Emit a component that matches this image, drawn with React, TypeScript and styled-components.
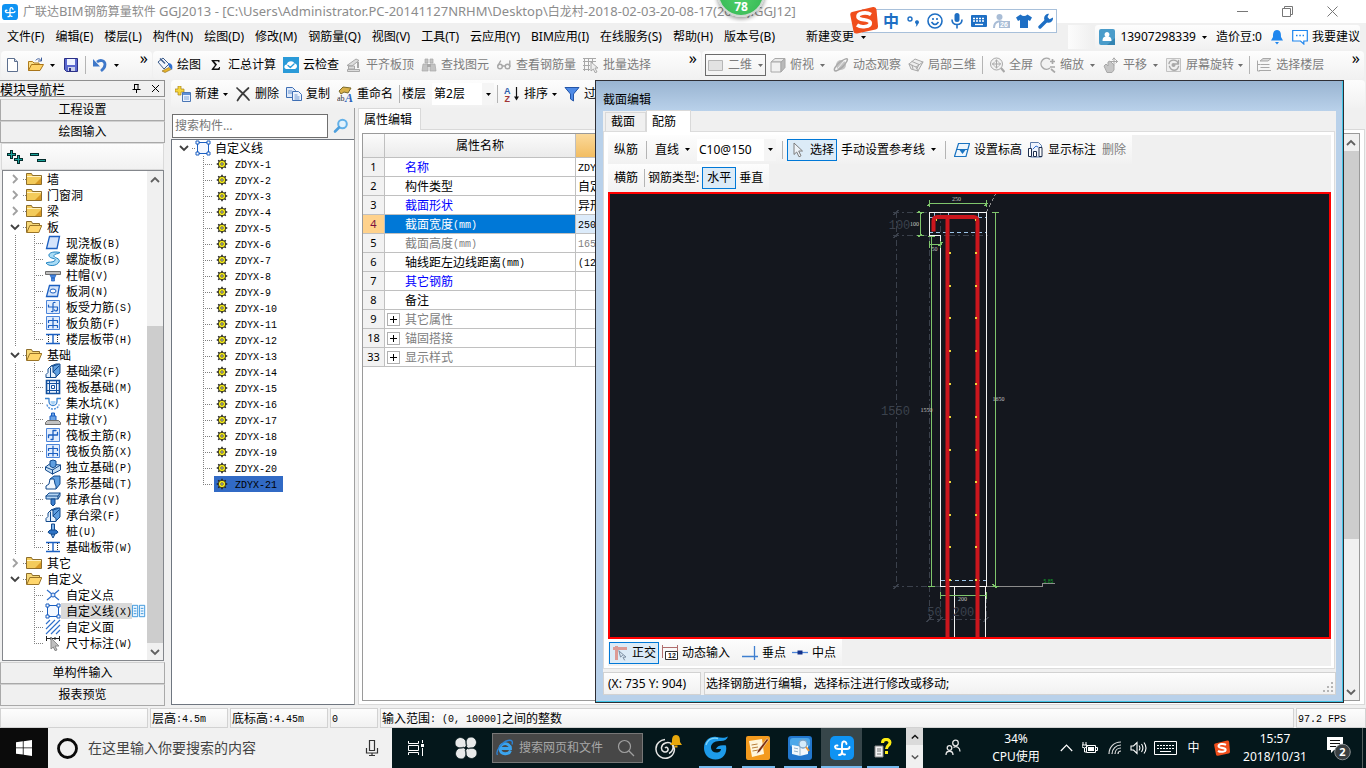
import React from "react";
import styled, { createGlobalStyle, css } from "styled-components";

const Global = createGlobalStyle`
  *, *::before, *::after { box-sizing: border-box; }
  html, body { margin: 0; padding: 0; }
  body {
    font-family: "Noto Sans", "Noto Sans CJK SC", sans-serif;
    font-size: 12px;
    line-height: 16px;
    color: #000;
    background: #f0f0f0;
    overflow: hidden;
  }
  button, input, select {
    font: inherit;
    color: inherit;
    margin: 0;
    padding: 0;
    border: 0;
    background: none;
    border-radius: 0;
    outline: none;
  }
  svg { display: block; flex: none; }
  ul { list-style: none; margin: 0; padding: 0; }
  a { color: inherit; text-decoration: none; }
`;

/* ---------- shared text and icon helpers ---------- */

const Mono = styled.span`
  font-family: "Liberation Mono", monospace;
  font-size: 10px;
  line-height: 10px;
  vertical-align: 1px;
`;

const SongWrap = styled.span`
  display: inline-block;
  height: 16px;
  vertical-align: top;
  font-family: "Noto Sans CJK SC", sans-serif;
  font-size: 12px;
  line-height: 16px;
  white-space: pre;
`;

/* Chinese runs stay 12px wide, Latin runs take the half-width face. */
function Song({ children }: { children: string }) {
  const runs = children.match(/[\x20-\x7e]+|[^\x20-\x7e]+/g) ?? [];
  return (
    <SongWrap>
      {runs.map((r, i) => (/^[\x20-\x7e]/.test(r) ? <Mono key={i}>{r}</Mono> : r))}
    </SongWrap>
  );
}

const line = { fill: "none", strokeLinecap: "round" as const, strokeLinejoin: "round" as const };
const G = "#a8a8a8";
const B = "#1b5fc1";

const glyphs: Record<string, React.ReactNode> = {
  doc: (
    <>
      <path d="M2.500 1.500h7l3 3v10h-10z" fill="#fff" stroke="#5d6f8e" />
      <path d="M9.500 1.500v3h3" fill="#cfdcf0" stroke="#5d6f8e" />
    </>
  ),
  open: (
    <>
      <path d="M.5 13.500v-9h4l1.500 1.500h5v3" fill="#fbe08a" stroke="#b07c1c" />
      <path d="M.5 13.500l3-6h12l-3.500 6z" fill="#ffd367" stroke="#a9751a" />
      <path d="M8 3c2-2 4-1.500 5 .5m.5-2.500v3h-3" {...line} stroke="#3a5a9a" />
    </>
  ),
  save: (
    <>
      <path d="M1.500 1.500h13v13h-11l-2-2z" fill="#5a68cf" stroke="#2a2f86" />
      <path d="M4 2h8v6H4z" fill="#eef2ff" />
      <path d="M5 10h7v4H5z" fill="#c9cfe9" />
      <path d="M6 11h2v3H6z" fill="#2a2f86" />
    </>
  ),
  undo: (
    <>
      <path d="M5 5c4-3 8-1 8 2.500 0 3-2 5-4 6.500" fill="none" stroke="#3f78c9" strokeWidth="2.800" />
      <path d="M1 2v7.500h7z" fill="#3f78c9" />
    </>
  ),
  paint: (
    <>
      <path d="M1 5l5-4 6 6-5 5z" fill="#f3f6fb" stroke="#3c5c8c" />
      <path d="M3 1.500l5 5" stroke="#3c5c8c" strokeWidth="1.400" />
      <path d="M11 6c4 0 5 3 4 7l-3-3z" fill="#2f6fd0" />
      <path d="M5 14l7-3.500 2 2-6 3z" fill="#e8b52c" stroke="#8a6413" strokeWidth=".6" />
    </>
  ),
  sigma: <path d="M3.500 3h8v2.200h-1c-.2-.8-.5-1-1.200-1H6.200L9 7.600 6 11.400h3.600c.9 0 1.200-.4 1.500-1.400h1L11.600 13h-8v-.8L7 8 3.500 3.800z" fill="#111" />,
  cloud: (
    <>
      <path d="M0 0h16v16H0z" fill="#2a9ad8" />
      <path d="M3 12c-2.500-1-2-4.500.8-4.500C4.500 4 10 3 11.500 6.500c3 0 3.500 4.500.5 5.500z" fill="#fff" />
      <path d="M5 8.500l2.300 2L11 7" {...line} stroke="#2a9ad8" strokeWidth="1.300" />
    </>
  ),
  align: (
    <>
      <path d="M1 8.500L10 2l3 1.500L6 9zM2.500 9h6v3h-6zM1.500 12.500h12v2h-12z" fill="#dcdcdc" stroke={G} />
      <path d="M12 5v6" stroke={G} strokeWidth="2" />
    </>
  ),
  binoc: (
    <>
      <path d="M4 2h3v4H4zM9 2h3v4H9zM2 7h5v7H1zM9 7h5l1 7H9z" fill="#c3c3c3" stroke={G} strokeWidth=".7" />
      <path d="M6 7h4v3H6z" fill={G} />
    </>
  ),
  glasses: (
    <g {...line} stroke={G} strokeWidth="1.400">
      <circle cx="4" cy="9.500" r="2.300" />
      <circle cx="11.500" cy="9.500" r="2.300" />
      <path d="M6.300 9h3M2 8.500L4.500 4M13.800 9.500V4" />
    </g>
  ),
  batch: (
    <>
      <path d="M1.500 1v13M5.500 1v13M9.500 1v5M0 1.500h13M0 4.500h13M0 8.500h7M0 12.500h7" fill="none" stroke={G} />
      <path d="M8 5l7 6h-3l2 4-2 .6-1.600-3.600L8 14z" fill="#eee" stroke={G} />
    </>
  ),
  slab: <path d="M.5 3.500h14v10H.5z" fill="#e2e2e2" stroke="#b6b6b6" />,
  cube: (
    <>
      <path d="M1 5l4-3.500h10L11 5z" fill="#e9e9e9" stroke={G} />
      <path d="M1 5h10v10H1z" fill="#f1f1f1" stroke={G} />
      <path d="M11 5l4-3.500v9L11 15z" fill="#b9b9b9" stroke={G} />
    </>
  ),
  orbit: (
    <>
      <circle cx="8" cy="8" r="5" fill="#c2c2c2" />
      <path d="M3 14C-1 14 3 8 7 5s9-5 7-1-7 9-11 10z" fill="none" stroke={G} strokeWidth="1.500" />
      <path d="M5 11l6-7" stroke="#eee" />
    </>
  ),
  part3d: (
    <>
      <path d="M1 7l6-5 8 3-5 9-7-2z" fill="#eee" stroke={G} />
      <path d="M1 7l7 3 7-5M8 10l2 4M4 4.500l7 3-2 4M4 8L5 12" {...line} stroke={G} />
    </>
  ),
  full: (
    <>
      <circle cx="7.500" cy="7" r="6" fill="#f2f2f2" stroke={G} />
      <path d="M7.500 3v8M3.500 7h8M6 4.500L7.500 3 9 4.500M6 9.500L7.500 11 9 9.500M5 5.500L3.500 7 5 8.500M10 5.500L11.500 7 10 8.500" {...line} stroke={G} />
      <path d="M12 11l3.500 4" stroke={G} strokeWidth="2.200" />
    </>
  ),
  zoom: (
    <>
      <path d="M10 2.500A5.500 5.500 0 1 0 10 11" fill="#f2f2f2" stroke={G} strokeWidth="1.400" />
      <path d="M10 4.500h5M12.500 2v5M11 12l4 3.500" stroke={G} strokeWidth="1.700" />
      <path d="M10 10h5" stroke={G} strokeWidth="1.500" />
    </>
  ),
  pan: (
    <>
      <path d="M1 9l2-2 2 2V5l2-1 4 4v5l-2 2.500H4z" fill="#c6c6c6" stroke={G} />
      <path d="M11 1v7M7.500 4.500h7M9.500 2.500L11 1l1.500 1.500M13 3l1.500 1.500L13 6" {...line} stroke={G} />
    </>
  ),
  rotate: (
    <>
      <path d="M.5 1.500h14v13H.5z" fill="#efefef" stroke="#c2c2c2" />
      <path d="M3 6.500C4 2 11 2 12 6.500m.5-3v3.500H9M12.500 9.500c-1.500 5-7 5-9 0" {...line} stroke={G} strokeWidth="1.400" />
      <circle cx="7.500" cy="8" r="2" fill={G} />
    </>
  ),
  floors: (
    <>
      <path d="M4 4l3-2.500h8L12 4zM4.500 7.500h9M4.500 10.500h9M3 13.500h12" fill="#d8d8d8" stroke={G} />
      <path d="M1.500 4v10h2M1.500 7.500H4" {...line} stroke={G} />
    </>
  ),
  addnew: (
    <>
      <path d="M3 0h3v3h3v3H6v3H3V6H0V3h3z" fill="#f6d63b" stroke="#a8821a" strokeWidth=".7" />
      <path d="M7.500 6.500h8v9h-8z" fill="#e9f1fd" stroke="#4a76b5" />
      <path d="M8 7h7v2H8z" fill="#5d8fd8" />
      <path d="M9 11h5M9 13h5" stroke="#7ea3d8" />
    </>
  ),
  cross: <path d="M2 2c3 3 8 7 12 12M13.500 2C9 6 5 10 2.500 14.500" {...line} stroke="#3c3c3c" strokeWidth="1.700" />,
  copy: (
    <>
      <path d="M.5 1.500h6l3 3v7h-9z" fill="#dfeafa" stroke="#3f6fb4" />
      <path d="M6.500 5.500h6l3 3v6h-9z" fill="#eef4fd" stroke="#3f6fb4" />
      <path d="M2 5h4M2 7h4M8.500 9h3M8.500 11h5M8.500 13h5" stroke="#6d97d2" />
    </>
  ),
  rename: (
    <>
      <path d="M2 5l4-4 8 1-3 5-4-1-3 2z" fill="#d8b04a" stroke="#7c6a2a" />
      <text x="0" y="15" fontSize="8" fontFamily="Liberation Serif" fill="#333">ab</text>
      <text x="8" y="15.500" fontSize="12" fontWeight="bold" fontStyle="italic" fontFamily="Liberation Serif" fill="#2a5fb8">A</text>
    </>
  ),
  sort: (
    <>
      <text x="0" y="7.500" fontSize="9" fontWeight="bold" fontFamily="Liberation Sans" fill="#2f5fae">A</text>
      <text x="0.500" y="15.500" fontSize="9" fontWeight="bold" fontFamily="Liberation Sans" fill="#a03535">Z</text>
      <path d="M12.500 1v11" stroke="#111" strokeWidth="1.200" />
      <path d="M10 10.500h5l-2.500 4z" fill="#111" />
    </>
  ),
  funnel: <path d="M1 1.500h14L9.500 8v7l-3-2V8z" fill="#4e8ae6" stroke="#2355a8" />,
  search: (
    <>
      <circle cx="9.500" cy="6" r="4.300" fill="#e2f2fd" stroke="#62b0e8" strokeWidth="2" />
      <path d="M6 9.500L2 13.500" stroke="#4c9fdd" strokeWidth="2.600" strokeLinecap="round" />
    </>
  ),
  folder: (
    <>
      <path d="M.5 13.500v-11h5l1 2h9v9z" fill="#f3cb5b" stroke="#8d6d2b" />
      <path d="M1 5.500h14" stroke="#fff1c0" />
      <path d="M9 13L15 7v6z" fill="#d89a25" />
    </>
  ),
  folderOpen: (
    <>
      <path d="M.5 13.500v-11h5l1 2h7v2" fill="#f6d878" stroke="#8d6d2b" />
      <path d="M.8 13.500l3-7h12l-3 7z" fill="#ffd66c" stroke="#9a7427" />
    </>
  ),
  line: (
    <>
      <path d="M2.500 2.500h11v11h-11z" fill="#f4f8ff" stroke={B} />
      <path d="M1 1h3v3H1zM12 1h3v3h-3zM1 12h3v3H1zM12 12h3v3h-3z" fill="#fff" stroke={B} />
    </>
  ),
  castSlab: <path d="M4.500 1.500h10l-2.500 12H1.500z" fill="#d4e4fb" stroke={B} strokeWidth="1.300" />,
  spiral: <path d="M15 1.500C8 0 3 2 4 5s8 2 6 4.500-7 1-9 2.500c3 4 11 3 13-1S8 7 9 4.500s4-1 6-3z" fill="#a9dcf6" stroke="#2384c2" />,
  cap: (
    <>
      <path d="M.5 4.500h15v3H.5z" fill="#bdbdbd" stroke="#6d6d6d" />
      <path d="M5 8h6l-1.500 3h-3zM6.500 11h3v3h-3z" fill="#4c88dc" stroke={B} strokeWidth=".7" />
    </>
  ),
  slabHole: (
    <>
      <path d="M4.500 2.500h10l-2 11h-11z" fill="#d4e4fb" stroke={B} strokeWidth="1.300" />
      <ellipse cx="8" cy="8" rx="3" ry="2" fill="#fff" stroke={B} />
    </>
  ),
  rebarS: (
    <>
      <path d="M1.500 1.500h13v13h-13z" fill="#e2edfd" stroke="#4d86da" />
      <path d="M10 3.500q-2-.5-2 1.500v7q0 1-1.500.5M3.500 8h9v3q-2 2-3 0M3.500 8V6" {...line} stroke={B} strokeWidth="1.200" />
    </>
  ),
  rebarF: (
    <>
      <path d="M1.500 1.500h13v13h-13z" fill="#e2edfd" stroke="#4d86da" />
      <path d="M8 3v10M3.500 5.500h9M3.500 10.500h9M3.500 5.500v2M12.500 5.500v2M3.500 10.500v2M12.500 10.500v2" {...line} stroke={B} strokeWidth="1.200" />
    </>
  ),
  band: (
    <>
      <path d="M1 3.500h14M1 12.500h14" stroke={B} strokeWidth="1.400" />
      <path d="M8 4v8" stroke={B} strokeWidth="1.400" />
      <path d="M3.500 4v8M12.500 4v8" stroke="#333" strokeDasharray="1 1" />
    </>
  ),
  beam: (
    <>
      <path d="M6 3l5-2h4v9l-4 4H8z" fill="#5f9fe0" stroke="#134a8c" />
      <path d="M1 14.500v-3l2-2V6l3-3h2v6l3 2.500v3z" fill="#e6f1fc" stroke="#134a8c" />
      <path d="M5.500 5v9M8 3l5-1.500M8 9l6-6" {...line} stroke="#134a8c" />
    </>
  ),
  raft: (
    <>
      <path d="M1.500 1.500h13v13h-13z" fill="#e9f2fd" stroke="#12509e" strokeWidth="1.600" />
      <path d="M4.500 2v12M11.500 2v12M2 4.500h12M2 11.500h12" fill="none" stroke="#12509e" />
      <path d="M6.500 6.500h3v3h-3z" fill="#fff" stroke="#12509e" />
    </>
  ),
  sump: (
    <>
      <path d="M0 3.500h4v3a4 4 0 0 0 8 0v-3h4" {...line} stroke="#3a83cf" strokeWidth="1.300" />
      <path d="M5.500 6h5v2l-2.500 1.500L5.500 8z" fill="#a9d2f5" />
      <path d="M2 9.500c1 6 11 6 12 0" fill="none" stroke="#5b97dc" strokeDasharray="2 1" strokeWidth="1.500" />
    </>
  ),
  pier: (
    <>
      <path d="M5 9V5h6v4M6.500 5V2h3v3" fill="#6ea4e4" stroke={B} />
      <path d="M.5 13.500v-2l2-2h11l2 2v2z" fill="#c2c2c2" stroke="#6d6d6d" />
    </>
  ),
  rebarR: (
    <>
      <path d="M1.500 1.500h13v13h-13z" fill="#e2edfd" stroke="#4d86da" />
      <path d="M8 3.500v9M3.500 8h9M3.500 8v2.500M8 3.500h3M12.500 8V5.500M8 12.500H6" {...line} stroke={B} strokeWidth="1.300" />
    </>
  ),
  isolated: (
    <>
      <path d="M.5 8l4-3 11 1v5l-8 4-7-4z" fill="#c7e0f6" stroke="#134a8c" />
      <path d="M5 2l3-1 3 1v5l-3 2-3-2z" fill="#5f9fe0" stroke="#134a8c" />
      <path d="M.5 8l7 3 8-5M7.500 11v4" {...line} stroke="#134a8c" />
    </>
  ),
  strip: (
    <>
      <path d="M5 4l4-3h6v8l-4 5z" fill="#5f9fe0" stroke="#134a8c" />
      <path d="M1 14v-3l3-2 1-5h4l1 5 1 2v3z" fill="#f1f7fd" stroke="#134a8c" />
    </>
  ),
  pileCap: (
    <>
      <path d="M1 5l3-3h11v3l-2 3H1z" fill="#b6d6f4" stroke="#134a8c" />
      <path d="M1 5h12v3M13 5l2-3" {...line} stroke="#134a8c" />
      <path d="M6 8h4v5l-2 2-2-2z" fill="#3c7fcf" stroke="#134a8c" />
    </>
  ),
  pile: (
    <>
      <path d="M6.500 1h3v11L8 15l-1.500-3z" fill="#7eb3ea" stroke="#134a8c" />
      <path d="M3 9c1 3 9 3 10 0l-2-2H5z" fill="#2e73c4" stroke="#134a8c" />
    </>
  ),
  point: (
    <>
      <path d="M2 3l12 10M14 3L2 13" stroke="#2e6fca" strokeWidth="1.200" />
      <circle cx="8" cy="8" r="2" fill="#dceaff" stroke={B} />
    </>
  ),
  area: <path d="M1 5l4-4M1 10l9-9M1 15L15 1M6 15l9-9M11 15l4-4" stroke="#2e6fca" strokeWidth="1.100" />,
  dims: (
    <>
      <path d="M1.500 1v5M14.500 1v5M1 3.500h14M6 2v3M10 2v3" stroke="#222" />
      <path d="M6 3l8 8h-4l2 4-2 .6L8.300 12 6 14z" fill="#bfbfbf" stroke="#8a8a8a" />
    </>
  ),
  gear: (
    <>
      <g stroke="#222" strokeWidth="2">
        <path d="M8 1v14M1 8h14M3 3l10 10M13 3L3 13" />
      </g>
      <circle cx="8" cy="8" r="5" fill="#f5ec19" stroke="#222" strokeWidth="1.200" />
      <circle cx="8" cy="8" r="1.600" fill="#fff" stroke="#222" />
    </>
  ),
  cursor: <path d="M4 1l8.500 8H8.700l2.300 4.800-2 1L6.700 10 4 12.500z" fill="#eef3f8" stroke="#7c7c7c" />,
  elev: (
    <>
      <path d="M4.500 1.500h11l-3.500 13H.5z" fill="#eef6fd" stroke="#1a73c0" strokeWidth="1.200" />
      <path d="M2 7.500h12" stroke="#1a73c0" />
      <path d="M5.500 8h6l-3 4z" fill="#1a73c0" />
    </>
  ),
  chart: (
    <>
      <path d="M2.500.5h8l3 3V15h-11z" fill="#eef4ff" stroke="#5c7cab" />
      <path d="M.5 14.500v-8h3v8zM5.500 14.500v-5h3v5zM11 14.500v-9h3v9z" fill="#fff" stroke="#1f2f4d" />
      <path d="M5 7l3-3 2 1" {...line} stroke="#2f6fd0" />
    </>
  ),
  ortho: (
    <>
      <path d="M1 3.500h14M4.500 1v14" stroke="#dd9a94" strokeWidth="3" />
      <path d="M7 6l7 6-3 .3 1.500 2.700M7 6l1.500 6 2-1.500" {...line} stroke="#7a8ca0" />
    </>
  ),
  dyn: (
    <>
      <path d="M.5 0v13M15.500 0v6M.5 2.500h15" fill="none" stroke="#b06d6d" />
      <path d="M3.500 6.500h12v8h-12z" fill="#fff" stroke="#333" />
      <text x="6" y="13" fontSize="7" fontWeight="bold" fontFamily="Liberation Sans" fill="#111">12</text>
    </>
  ),
  perp: <path d="M0 11.500h16M12.500 1v14" stroke="#3f7fd0" strokeWidth="1.300" />,
  mid: (
    <>
      <path d="M0 7.500h16" stroke="#4d86d8" strokeWidth="1.300" />
      <path d="M5.500 5.500h5v4h-5z" fill="#12308a" />
    </>
  ),
  user: (
    <>
      <rect width="16" height="16" rx="2" fill="#4a9cca" />
      <path d="M16 9v7H8z" fill="#3484b2" />
      <path d="M8 3a2.500 2.500 0 0 1 1.500 4.500c2 .5 3 1.500 3 4.500h-9c0-3 1-4 3-4.500A2.500 2.500 0 0 1 8 3z" fill="#fff" />
    </>
  ),
  bell: <path d="M8 1c4 0 4 4 4 7l2 3.500H2L4 8c0-3 0-7 4-7zM6 13h4l-2 2.500z" fill="#1f86ee" />,
  chat: (
    <>
      <path d="M.7 1.500h14.600v10.500h-3.500v3l-3.300-3H.7z" fill="#fff" stroke="#1f86ee" strokeWidth="1.200" />
      <path d="M4 6.500h1.500M7.300 6.500h1.500M10.600 6.500H12" stroke="#1f86ee" strokeWidth="1.300" />
    </>
  ),
  columns: (
    <>
      <path d="M.5 1.500h6v13h-6zM8.500 1.500h6v13h-6z" fill="#eaf5ff" stroke="#2f8fd8" />
      <path d="M2 5h3M2 8h3M2 11h3M10 5h3M10 8h3M10 11h3" stroke="#2f8fd8" />
    </>
  ),
};

function Icon({ name, size = 16 }: { name: string; size?: number }) {
  return (
    <svg width={size} height={size} viewBox="0 0 16 16" aria-hidden="true">
      {glyphs[name]}
    </svg>
  );
}

const CaretBox = styled.span<{ $dim?: boolean; $tight?: boolean }>`
  display: inline-flex;
  justify-content: center;
  align-items: center;
  width: ${(p) => (p.$tight ? 5 : 8)}px;
  color: ${(p) => (p.$dim ? "#6e6e6e" : "#000")};
`;

function Caret({ dim, tight }: { dim?: boolean; tight?: boolean }) {
  return (
    <CaretBox $dim={dim} $tight={tight}>
      <svg width="5" height="3" viewBox="0 0 5 3" aria-hidden="true">
        <path d="M0 0h5L2.500 3z" fill="currentColor" />
      </svg>
    </CaretBox>
  );
}

function Chevron({ dir, color = "#404040", size = 10 }: { dir: "up" | "down" | "right"; color?: string; size?: number }) {
  const d = { up: "M1 7l4-4 4 4", down: "M1 3l4 4 4-4", right: "M3 1l4 4-4 4" }[dir];
  return (
    <svg width={size} height={size} viewBox="0 0 10 10" aria-hidden="true">
      <path d={d} fill="none" stroke={color} strokeWidth="1.800" />
    </svg>
  );
}

/* ---------- window chrome ---------- */

const Page = styled.div`
  position: relative;
  display: flex;
  flex-direction: column;
  height: 100vh;
  overflow: hidden;
`;

const TitleBar = styled.header`
  display: flex;
  align-items: center;
  height: 23px;
  padding: 0 28px 0 2px;
  background: #fff;
  color: #8c8c8c;
  white-space: nowrap;
`;

const TitleText = styled.h1`
  flex: 1;
  margin: 0 0 0 5px;
  font-size: 12px;
  font-weight: 400;
  line-height: 22px;
`;

const TitleLatin = styled.span`
  font-size: 13px;
`;

const WindowButtons = styled.div`
  display: flex;
  gap: 34px;
`;

const PlainButton = styled.button`
  display: inline-flex;
  align-items: center;
  justify-content: center;
`;

const MenuBar = styled.nav`
  display: flex;
  align-items: center;
  gap: 11px;
  height: 28px;
  padding: 0 6px 0 7px;
  white-space: nowrap;
`;

const MenuItem = styled.button`
  display: inline-flex;
  align-items: center;
  gap: 5px;
  white-space: nowrap;
`;

const MenuSpacer = styled.span<{ $w?: number }>`
  ${(p) => (p.$w ? `width: ${p.$w}px;` : "flex: 1;")}
`;

const barFill = css`
  background: linear-gradient(#fdfdfd, #f1f1f1);
`;

const Account = styled.div`
  ${barFill}
  display: flex;
  align-items: center;
  gap: 7px;
  height: 24px;
  padding-left: 4px;
  border-radius: 3px;
`;

const AccountStub = styled.span`
  width: 24px;
  height: 24px;
  margin-right: -8px;
  background: linear-gradient(90deg, #fcfcfc, #f0f0f0);
`;

const Divider = styled.span`
  flex: none;
  width: 1px;
  height: 18px;
  background: #b4b4b4;
`;

const ToolStrip = styled.div<{ $left?: number; $width?: number; $grow?: boolean }>`
  ${barFill}
  display: flex;
  align-items: center;
  gap: 7px;
  height: 28px;
  padding-left: ${(p) => p.$left ?? 4}px;
  border-radius: 4px;
  white-space: nowrap;
  ${(p) => (p.$width ? `width: ${p.$width}px;` : "")}
  ${(p) => (p.$grow ? "flex: 1;" : "flex: none;")}
  > ${Divider} { margin: 0 -1px; }
`;

const ToolButton = styled.button<{ $dim?: boolean; $boxed?: boolean; $active?: number }>`
  display: inline-flex;
  align-items: center;
  gap: 4px;
  flex: none;
  height: 22px;
  white-space: nowrap;
  color: ${(p) => (p.$dim ? "#7d7d7d" : "#000")};
  ${(p) => p.$boxed && "border: 1px solid #6b6b6b; padding: 0 1px 0 2px; margin-right: -3px;"}
  ${(p) => p.$active && `border: 1px solid #0078d7; background: #dcebf7; padding: 0 ${p.$active}px;`}
`;

const More = styled.button`
  align-self: flex-start;
  margin-left: auto;
  padding-right: 4px;
  font-size: 16px;
  line-height: 14px;
`;

const ToolbarRow = styled.div`
  display: flex;
  gap: 1px;
  padding: 0 2px 0 1px;
`;

interface ToolProps {
  icon?: string;
  label: string;
  dim?: boolean;
  caret?: boolean | "tight";
  boxed?: boolean;
  active?: boolean;
}

function Tool({ icon, label, dim, caret, boxed, active }: ToolProps) {
  return (
    <ToolButton type="button" $dim={dim} $boxed={boxed} $active={active ? (icon ? 2 : 4) : undefined}>
      {icon && <Icon name={icon} />}
      <span>{label}</span>
      {caret && <Caret dim={dim} tight={caret === "tight"} />}
    </ToolButton>
  );
}

/* ---------- body panels ---------- */

const Body = styled.main`
  position: relative;
  flex: 1;
  min-height: 0;
  display: flex;
`;

const NavPanel = styled.aside`
  display: flex;
  flex-direction: column;
  width: 166px;
  flex: none;
  padding: 1px 1px 1px 0;
`;

const NavHeader = styled.div`
  display: flex;
  align-items: center;
  justify-content: space-between;
  height: 17px;
  padding-right: 4px;
  border: 1px solid #8f8f8f;
  border-left: 0;
  margin-bottom: 2px;
  font-size: 13px;
`;

const NavTools = styled.div`
  display: flex;
  gap: 10px;
`;

const NavButton = styled.button`
  flex: none;
  height: 22px;
  border: 1px solid #a9a9a9;
  border-top-color: #d0d0d0;
  background: #f0f0f0;
`;

const ExpandBar = styled.div`
  ${barFill}
  display: flex;
  align-items: center;
  gap: 7px;
  height: 27px;
  padding-left: 5px;
  margin: 0 1px;
  border: 1px solid #dadada;
`;

const TreeFrame = styled.div`
  display: flex;
  flex: 1;
  min-height: 0;
  margin: 0 1px 1px 2px;
  border: 1px solid #84878c;
  background: #fff;
  overflow: hidden;
`;

const Tree = styled.ul`
  flex: 1;
  min-width: 0;
  overflow: hidden;
`;

const dots = (dir: string) => `repeating-linear-gradient(${dir}, #808080 0 1px, transparent 1px 2px)`;

const RootRow = styled.li`
  display: flex;
  align-items: center;
  height: 16px;
  padding-left: 7px;
  white-space: nowrap;
  svg:first-child { margin-right: 6px; }
  background: ${dots("to right")} no-repeat 20px 8px / 3px 1px;
`;

const ChildRow = styled.li<{ $last?: boolean; $trunk?: boolean }>`
  display: flex;
  align-items: center;
  height: 16px;
  padding-left: 42px;
  white-space: nowrap;
  background-image: ${dots("to right")}, ${dots("to bottom")}${(p) => (p.$trunk ? `, ${dots("to bottom")}` : "")};
  background-repeat: no-repeat;
  background-position: 31px 8px, 31px 0, 12px 0;
  background-size: 10px 1px, 1px ${(p) => (p.$last ? 8 : 16)}px, 1px 16px;
`;

const Label = styled.span<{ $bg?: string; $pad?: number }>`
  display: inline-flex;
  align-items: center;
  height: 16px;
  padding-left: ${(p) => p.$pad ?? 5}px;
  background: ${(p) => p.$bg ?? "transparent"};
`;

const Scroll = styled.div`
  display: flex;
  flex-direction: column;
  width: 16px;
  flex: none;
  background: #f0f0f0;
`;

const ScrollEnd = styled.button`
  display: flex;
  align-items: center;
  justify-content: center;
  height: 17px;
  flex: none;
`;

const Track = styled.div<{ $grow: number }>`
  flex: ${(p) => p.$grow};
`;

const Thumb = styled.div<{ $grow: number }>`
  flex: ${(p) => p.$grow};
  background: #cdcdcd;
`;

const navRoots: { name: string; open?: boolean; kids?: [string, string][] }[] = [
  { name: "墙" },
  { name: "门窗洞" },
  { name: "梁" },
  {
    name: "板",
    open: true,
    kids: [
      ["castSlab", "现浇板(B)"], ["spiral", "螺旋板(B)"], ["cap", "柱帽(V)"], ["slabHole", "板洞(N)"],
      ["rebarS", "板受力筋(S)"], ["rebarF", "板负筋(F)"], ["band", "楼层板带(H)"],
    ],
  },
  {
    name: "基础",
    open: true,
    kids: [
      ["beam", "基础梁(F)"], ["raft", "筏板基础(M)"], ["sump", "集水坑(K)"], ["pier", "柱墩(Y)"],
      ["rebarR", "筏板主筋(R)"], ["rebarF", "筏板负筋(X)"], ["isolated", "独立基础(P)"], ["strip", "条形基础(T)"],
      ["pileCap", "桩承台(V)"], ["beam", "承台梁(F)"], ["pile", "桩(U)"], ["band", "基础板带(W)"],
    ],
  },
  { name: "其它" },
  {
    name: "自定义",
    open: true,
    kids: [["point", "自定义点"], ["line", "自定义线(X)"], ["area", "自定义面"], ["dims", "尺寸标注(W)"]],
  },
];

function ModuleNav() {
  return (
    <NavPanel>
      <NavHeader>
        模块导航栏
        <NavTools>
          <PlainButton type="button" aria-label="固定">
            <svg width="9" height="9" viewBox="0 0 9 9"><path d="M2.500 0v5M6 0v5M2 .5h4.500M.5 5.500h8M4.500 6v3" stroke="#000" fill="none" /></svg>
          </PlainButton>
          <PlainButton type="button" aria-label="关闭">
            <svg width="9" height="9" viewBox="0 0 9 9"><path d="M1 1l7 7M8 1L1 8" stroke="#000" /></svg>
          </PlainButton>
        </NavTools>
      </NavHeader>
      <NavButton type="button">工程设置</NavButton>
      <NavButton type="button">绘图输入</NavButton>
      <ExpandBar>
        <PlainButton type="button" aria-label="全部展开">
          <svg width="16" height="14" viewBox="0 0 16 14">
            <path d="M4.500 0v9M0 4.500h9M11.500 5v9M7 9.500h9" stroke="#062c2c" strokeWidth="3" />
            <path d="M4.500 1v7M1 4.500h7M11.500 6v7M8 9.500h7" stroke="#1aa39b" />
          </svg>
        </PlainButton>
        <PlainButton type="button" aria-label="全部折叠">
          <svg width="16" height="14" viewBox="0 0 16 14">
            <path d="M0 4.500h9M7 10.500h9" stroke="#062c2c" strokeWidth="3" />
            <path d="M1 4.500h7M8 10.500h7" stroke="#1aa39b" />
          </svg>
        </PlainButton>
      </ExpandBar>
      <TreeFrame>
        <Tree>
          {navRoots.map((r, ri) => (
            <React.Fragment key={r.name}>
              <RootRow>
                <Chevron dir={r.open ? "down" : "right"} color={r.open ? "#404040" : "#a0a0a0"} />
                <Icon name={r.open ? "folderOpen" : "folder"} />
                <Label><Song>{r.name}</Song></Label>
              </RootRow>
              {r.kids?.map(([icon, name], i) => (
                <ChildRow key={name} $last={i === r.kids!.length - 1} $trunk={ri < navRoots.length - 1}>
                  <Icon name={icon} />
                  <Label $bg={name === "自定义线(X)" ? "#d9d9d9" : undefined}><Song>{name}</Song></Label>
                  {name === "自定义线(X)" && <Icon name="columns" size={14} />}
                </ChildRow>
              ))}
            </React.Fragment>
          ))}
        </Tree>
        <Scroll>
          <ScrollEnd type="button" aria-label="向上"><Chevron dir="up" color="#606060" /></ScrollEnd>
          <Track $grow={137} />
          <Thumb $grow={316} />
          <ScrollEnd type="button" aria-label="向下"><Chevron dir="down" color="#606060" /></ScrollEnd>
        </Scroll>
      </TreeFrame>
      <NavButton type="button">单构件输入</NavButton>
      <NavButton type="button">报表预览</NavButton>
    </NavPanel>
  );
}

const Work = styled.div`
  flex: 1;
  min-width: 0;
  display: flex;
  flex-direction: column;
  padding: 1px 1px 2px 5px;
`;

const WorkColumns = styled.div`
  flex: 1;
  min-height: 0;
  display: flex;
  gap: 3px;
`;

const ListPanel = styled.section`
  display: flex;
  flex-direction: column;
  width: 184px;
  flex: none;
  padding-top: 5px;
  border-right: 1px solid #a0a0a0;
`;

const SearchRow = styled.label`
  display: flex;
  align-items: center;
  height: 26px;
  padding: 0 5px 1px 1px;
  gap: 5px;
`;

const SearchInput = styled.input`
  flex: 1;
  min-width: 0;
  height: 24px;
  padding: 0 2px;
  border: 1px solid #6f6f6f;
  background: #fff;
  &::placeholder { color: #777; opacity: 1; }
`;

const ListFrame = styled.div`
  flex: 1;
  min-height: 0;
  border: 1px solid #6f7680;
  border-right: 0;
  background: #fff;
  overflow: hidden;
`;

const PropPanel = styled.section`
  flex: 1;
  min-width: 0;
  display: flex;
  flex-direction: column;
`;

const Tab = styled.button<{ $on?: boolean; $w: number }>`
  flex: none;
  width: ${(p) => p.$w}px;
  height: ${(p) => (p.$on ? 22 : 19)}px;
  padding-left: 5px;
  border: 1px solid #d9d9d9;
  border-bottom: 0;
  background: ${(p) => (p.$on ? "#fff" : "#f0f0f0")};
  margin-bottom: ${(p) => (p.$on ? -1 : 0)}px;
  text-align: left;
  z-index: 1;
`;

const TabRow = styled.div`
  display: flex;
  align-items: flex-end;
`;

const PropPane = styled.div`
  flex: 1;
  min-height: 0;
  display: flex;
  padding: 3px 4px 3px 3px;
  border: 1px solid #d9d9d9;
  background: #fff;
`;

const PropFrame = styled.div`
  flex: 1;
  min-width: 0;
  display: flex;
  border: 1px solid #9a9a9a;
  background: #fff;
`;

const TableArea = styled.div`
  flex: 1;
  min-width: 0;
`;

const PropTable = styled.table`
  width: 100%;
  border-collapse: separate;
  border-spacing: 0;
  table-layout: fixed;
  th, td {
    padding: 0;
    height: 19px;
    border-right: 1px solid #c0c0c0;
    border-bottom: 1px solid #c0c0c0;
    font-weight: 400;
    text-align: left;
    white-space: nowrap;
    overflow: hidden;
  }
  thead th {
    height: 24px;
    text-align: center;
    background: linear-gradient(#fbfbfb, #ebebeb);
  }
  thead th:last-child { background: linear-gradient(#fbd99a, #f2bd62); }
`;

const NumCell = styled.th<{ $sel?: boolean }>`
  && {
    text-align: center;
    font-size: 11px;
    background: ${(p) => (p.$sel ? "#ffd28c" : "#f2f2f2")};
    color: ${(p) => (p.$sel ? "#7a1040" : "#000")};
  }
`;

const NameCell = styled.td<{ $tone?: string; $sel?: boolean }>`
  color: ${(p) => (p.$sel ? "#fff" : p.$tone ?? "#000")};
  background: ${(p) => (p.$sel ? "#0078d7" : "#fff")};
`;

const NameInner = styled.span`
  display: grid;
  grid-template-columns: 12px auto;
  align-items: center;
  gap: 6px;
  padding-left: 2px;
  justify-content: start;
`;

const Plus = styled.button`
  width: 13px;
  height: 13px;
  display: grid;
  place-items: center;
  border: 1px solid #b0b0b0;
`;

const ValueCell = styled.td<{ $sel?: boolean; $tone?: string }>`
  && { padding-left: 2px; }
  color: ${(p) => p.$tone ?? "#000"};
  background: ${(p) => (p.$sel ? "#dcebfa" : "#fff")};
`;

const props: [string, string, string, string?, boolean?][] = [
  ["1", "名称", "ZDYX-21", "#0000ff"],
  ["2", "构件类型", "自定义线", "#000"],
  ["3", "截面形状", "异形", "#0000ff"],
  ["4", "截面宽度(mm)", "250", "#000"],
  ["5", "截面高度(mm)", "1650", "#808080"],
  ["6", "轴线距左边线距离(mm)", "(125)", "#000"],
  ["7", "其它钢筋", "", "#0000ff"],
  ["8", "备注", "", "#000"],
  ["9", "其它属性", "", "#808080", true],
  ["18", "锚固搭接", "", "#808080", true],
  ["33", "显示样式", "", "#808080", true],
];

const Combo = styled.label<{ $w: number }>`
  display: grid;
  grid-template-columns: 1fr 12px;
  width: ${(p) => p.$w}px;
  height: 22px;
  flex: none;
  background: #fff;
  align-items: center;
  > select {
    grid-area: 1 / 1 / 2 / 3;
    appearance: none;
    padding-left: 2px;
    height: 22px;
  }
  > span {
    grid-area: 1 / 2 / 2 / 3;
    width: 12px;
    height: 22px;
    background: #f5f5f5;
    pointer-events: none;
  }
`;

const ComboGroup = styled.div`
  display: flex;
  align-items: center;
  gap: 6px;
  margin-left: -4px;
  margin-right: -3px;
`;

function WorkArea() {
  const items = Array.from({ length: 21 }, (_, i) => `ZDYX-${i + 1}`);
  return (
    <Work>
      <ToolStrip>
        <Tool icon="addnew" label="新建" caret="tight" />
        <Tool icon="cross" label="删除" />
        <Tool icon="copy" label="复制" />
        <Tool icon="rename" label="重命名" />
        <Divider />
        <ComboGroup>
          楼层
          <Combo $w={62}>
            <select aria-label="楼层" defaultValue="2"><option value="2">第2层</option></select>
            <Caret />
          </Combo>
        </ComboGroup>
        <Divider />
        <Tool icon="sort" label="排序" caret="tight" />
        <Tool icon="funnel" label="过滤" caret />
      </ToolStrip>
      <WorkColumns>
        <ListPanel>
          <SearchRow>
            <SearchInput type="text" placeholder="搜索构件…" aria-label="搜索构件" />
            <PlainButton type="button" aria-label="搜索"><Icon name="search" /></PlainButton>
          </SearchRow>
          <ListFrame>
            <Tree>
              <RootRow>
                <Chevron dir="down" />
                <Icon name="line" />
                <Label $pad={4}><Song>自定义线</Song></Label>
              </RootRow>
              {items.map((t, i) => (
                <ChildRow key={t} $last={i === 20}>
                  <Label $pad={2} $bg={i === 20 ? "#316ac5" : undefined}>
                    <Icon name="gear" size={12} />
                  </Label>
                  <Label $pad={7} $bg={i === 20 ? "#316ac5" : undefined}><Song>{t + " "}</Song></Label>
                </ChildRow>
              ))}
            </Tree>
          </ListFrame>
        </ListPanel>
        <PropPanel>
          <TabRow>
            <Tab type="button" $on $w={63}>属性编辑</Tab>
          </TabRow>
          <PropPane>
            <PropFrame>
              <TableArea>
                <PropTable>
                  <colgroup>
                    <col width="22" />
                    <col width="191" />
                    <col />
                  </colgroup>
                  <thead>
                    <tr><th aria-label="序号" /><th>属性名称</th><th>属性值</th></tr>
                  </thead>
                  <tbody>
                    {props.map(([n, name, value, tone, group]) => (
                      <tr key={n}>
                        <NumCell scope="row" $sel={n === "4"}>{n}</NumCell>
                        <NameCell $tone={tone} $sel={n === "4"}>
                          <NameInner>
                            {group ? (
                              <Plus type="button" aria-label="展开">
                                <svg width="7" height="7" viewBox="0 0 7 7"><path d="M0 3.500h7M3.500 0v7" stroke="#000" /></svg>
                              </Plus>
                            ) : <span />}
                            <Song>{name}</Song>
                          </NameInner>
                        </NameCell>
                        <ValueCell $sel={n === "4"} $tone={n === "5" ? "#808080" : undefined}><Song>{value}</Song></ValueCell>
                      </tr>
                    ))}
                  </tbody>
                </PropTable>
              </TableArea>
              <Scroll>
                <ScrollEnd type="button" aria-label="向上"><Chevron dir="up" color="#606060" /></ScrollEnd>
                <Thumb $grow={388} />
                <Track $grow={144} />
                <ScrollEnd type="button" aria-label="向下"><Chevron dir="down" color="#606060" /></ScrollEnd>
              </Scroll>
            </PropFrame>
          </PropPane>
        </PropPanel>
      </WorkColumns>
    </Work>
  );
}

/* ---------- section editor window ---------- */

const Dialog = styled.section`
  position: absolute;
  left: 595px;
  right: 22px;
  top: 1px;
  bottom: 4px;
  display: flex;
  flex-direction: column;
  border: 1px solid #2e2e34;
  background: #b9d1ea;
  padding: 0 7px 7px;
  box-shadow: inset -1px -1px 0 #3fc4e6;
`;

const DialogTitle = styled.h2`
  flex: none;
  height: 30px;
  margin: 0 -6px 0 -7px;
  padding: 9px 7px 0;
  font-size: 12px;
  font-weight: 400;
  line-height: 20px;
  background: linear-gradient(#99b4d1, #b9d1ea);
`;

const DialogBody = styled.div`
  flex: 1;
  min-height: 0;
  display: flex;
  flex-direction: column;
  background: #f0f0f0;
`;

const Pane = styled.div`
  flex: 1;
  min-height: 0;
  display: flex;
  flex-direction: column;
  margin-right: 1px;
  padding: 3px 3px 2px 4px;
  border: 1px solid #dcdcdc;
  background: #fff;
`;

const PaneInner = styled.div`
  flex: 1;
  min-height: 0;
  display: flex;
  flex-direction: column;
  background: #f0f0f0;
`;

const DialogTabs = styled(TabRow)`
  height: 20px;
  padding-left: 2px;
`;

const StripPair = styled.div<{ $gap: number }>`
  display: flex;
  align-items: center;
  gap: ${(p) => p.$gap}px;
`;

const EditorStrip = styled.div<{ $h: number; $left: number }>`
  ${barFill}
  align-self: flex-start;
  display: flex;
  align-items: center;
  gap: 6px;
  height: ${(p) => p.$h}px;
  padding: 0 6px 0 ${(p) => p.$left}px;
  white-space: nowrap;
  > ${Divider} { margin: 0 2px; }
`;

const Viewport = styled.div`
  flex: 1;
  min-height: 0;
  border: 2px solid #ff0000;
  background: #14171e;
  overflow: hidden;
  > svg { width: 100%; height: 100%; }
`;

const DialogStatus = styled.div`
  display: flex;
  gap: 3px;
  height: 23px;
  margin-top: 3px;
`;

const StatusCell = styled.div<{ $w?: number; $pad?: number }>`
  ${barFill}
  ${(p) => (p.$w ? `width: ${p.$w}px; flex: none;` : "flex: 1;")}
  display: flex;
  align-items: center;
  padding-left: ${(p) => p.$pad ?? 1}px;
  border: 1px solid #d2d2d2;
  white-space: nowrap;
`;

const Grip = styled.svg`
  margin: auto 1px 1px auto;
`;

const dotYs = [253, 286, 318, 351, 384, 417, 450, 482, 515, 547, 580];

function SectionDrawing() {
  return (
    <svg viewBox="610 194 720 443" preserveAspectRatio="xMidYMid slice" role="img" aria-label="截面配筋图">
      <g fill="none" shapeRendering="crispEdges">
        <g stroke="#3b414c" strokeDasharray="6 3 2 3">
          <path d="M896.500 212v374M929.500 236v384M940.500 212v24M940.500 587v33M986.500 597v23" />
          <path d="M893 212.500h36M893 235.500h95M893 586.500h47M928 619.500h59" />
        </g>
        <g stroke="#3b414c">
          <path d="M894 215l5-5M894 238l5-5M894 589l5-5M927 622l5-5M938 622l5-5M984 622l5-5" />
        </g>
        <path d="M987 212l9-18" stroke="#8c8c8c" strokeDasharray="4 2" />
        <path d="M986 586.500h57v-3h12" stroke="#8c8c8c" />
        <path d="M929.500 232.500h57M941 580.500h45M929 217.500h57M934.500 213v4M948.500 213v4M978.500 213v4" stroke="#9cc4e8" strokeDasharray="4 3" />
        <path d="M929.500 212.500h57v374h-46v-351h-11zM954.500 587v52M985.500 587v52" stroke="#f4f4f4" />
        <g stroke="#7fc56c">
          <path d="M929 203.500h58M929.500 200v7M986.500 200v7M928 206l3-3M985 206l3-3" />
          <path d="M920.500 212v24M917 212.500h7M917 235.500h7M919 211l3 3M919 237l3-3" />
          <path d="M931.500 236v350M928 236.500h7M928 586.500h7" />
          <path d="M929 244.500h13M929.500 241v7M940.500 241v7M939 246l4-4" />
          <path d="M995.500 212v374M992 212.500h7M992 586.500h7M993 584l4 4" />
          <path d="M941 595.500h45M940.500 592v7M986.500 592v7" />
        </g>
      </g>
      <g fill="none" stroke="#cb161d" strokeWidth="4">
        <path d="M934 231.500V221q0-4 4-4h36q4 0 4 4v418M948 218v421" />
      </g>
      <g fill="#ecd43c" shapeRendering="crispEdges">
        {dotYs.map((y) => (
          <React.Fragment key={y}>
            <rect x="949" y={y - 1} width="2" height="2" />
            <rect x="975" y={y - 1} width="2" height="2" />
          </React.Fragment>
        ))}
        <rect x="936" y="219" width="1" height="2" />
        <rect x="975" y="219" width="1" height="2" />
      </g>
      <g fontFamily="Liberation Serif" fontSize="6" fill="#c6c6c6" textAnchor="middle">
        <text x="957" y="201">250</text>
        <text x="915" y="226">100</text>
        <text x="935" y="251">50</text>
        <text x="927" y="412">1550</text>
        <text x="999" y="401">1650</text>
        <text x="963" y="601">200</text>
      </g>
      <text x="1044" y="583" fontFamily="Liberation Sans" fontSize="5" fill="#12a02a">5.85</text>
      <g fontFamily="Liberation Mono" fontSize="12" fill="#3b424d" textAnchor="middle">
        <text x="900" y="229">100</text>
        <text x="896" y="415">1550</text>
        <text x="935" y="616">50</text>
        <text x="964" y="616">200</text>
      </g>
    </svg>
  );
}

function SectionEditor() {
  return (
    <Dialog role="dialog" aria-label="截面编辑">
      <DialogTitle>截面编辑</DialogTitle>
      <DialogBody>
        <DialogTabs>
          <Tab type="button" $w={41}>截面</Tab>
          <Tab type="button" $on $w={45}>配筋</Tab>
        </DialogTabs>
        <Pane>
          <PaneInner>
            <EditorStrip $h={29} $left={6}>
              <Tool label="纵筋" />
              <Divider />
              <Tool label="直线" caret />
              <Combo $w={79}>
                <select aria-label="钢筋规格" defaultValue="C10"><option value="C10">C10@150</option></select>
                <Caret />
              </Combo>
              <StripPair $gap={4}>
                <Divider />
                <Tool icon="cursor" label="选择" active />
                <Tool label="手动设置参考线" caret />
              </StripPair>
              <Divider />
              <Tool icon="elev" label="设置标高" />
              <Tool icon="chart" label="显示标注" />
              <Tool label="删除" dim />
            </EditorStrip>
            <EditorStrip $h={28} $left={6}>
              <Tool label="横筋" />
              <StripPair $gap={3}>
                <Divider />
                <Tool label="钢筋类型:" />
                <Tool label="水平" active />
                <Tool label="垂直" />
              </StripPair>
            </EditorStrip>
            <Viewport><SectionDrawing /></Viewport>
            <EditorStrip $h={27} $left={1}>
              <StripPair $gap={3}>
                <Tool icon="ortho" label="正交" active />
                <Tool icon="dyn" label="动态输入" />
              </StripPair>
              <span />
              <Tool icon="perp" label="垂点" />
              <Tool icon="mid" label="中点" />
            </EditorStrip>
          </PaneInner>
        </Pane>
        <DialogStatus>
          <StatusCell $w={98} $pad={4}>(X: 735 Y: 904)</StatusCell>
          <StatusCell>
            选择钢筋进行编辑，选择标注进行修改或移动;
            <Grip width="11" height="11" viewBox="0 0 11 11">
              <path d="M8 0h2v2H8zM4 4h2v2H4zM8 4h2v2H8zM0 8h2v2H0zM4 8h2v2H4zM8 8h2v2H8z" fill="#b5b5b5" />
            </Grip>
          </StatusCell>
        </DialogStatus>
      </DialogBody>
    </Dialog>
  );
}

/* ---------- status bar ---------- */

const StatusBar = styled.footer`
  display: flex;
  gap: 2px;
  height: 21px;
  padding-top: 1px;
  flex: none;
`;

/* ---------- floating widgets ---------- */

const Ball = styled.div`
  position: absolute;
  left: 717px;
  top: -31px;
  width: 48px;
  height: 48px;
  border-radius: 50%;
  background: radial-gradient(circle at 50% 60%, #4fd06a, #2fb04d);
  border: 2px solid #cfd8d2;
  box-shadow: 0 2px 4px rgba(0, 0, 0, 0.4);
  color: #fff;
  font-weight: 700;
  line-height: 14px;
  padding-top: 29px;
  text-align: center;
`;

const ImeBar = styled.div`
  position: absolute;
  left: 862px;
  top: 9px;
  width: 195px;
  height: 24px;
  display: flex;
  align-items: center;
  gap: 6px;
  padding-left: 20px;
  border: 1px solid #a8c0da;
  background: #fff;
`;

const ImeLogo = styled.span`
  position: absolute;
  left: -13px;
  top: -4px;
`;

const ImeText = styled.span`
  color: #1e6fc4;
  font-size: 16px;
  font-weight: 700;
  line-height: 20px;
`;

function SogouLogo({ size }: { size: number }) {
  return (
    <svg width={size} height={size} viewBox="0 0 28 28" aria-hidden="true">
      <path d="M2 6L23 1q3-.5 3.500 2.500L28 20q.3 3-2.500 3.600L7 27.500q-3 .6-3.500-2.200L.3 9Q0 6.500 2 6z" fill="#f04e1c" />
      <path d="M21 8.500C16 5.500 7.500 7 8 11c.5 3.800 12 1.800 12.300 5.800.3 4-9 5.200-13.300 2.200" fill="none" stroke="#fff" strokeWidth="3.600" />
    </svg>
  );
}

/* ---------- taskbar ---------- */

const TaskBar = styled.footer`
  display: flex;
  align-items: stretch;
  flex: none;
  height: 40px;
  background: #04171b;
  color: #fff;
  white-space: nowrap;
`;

const Start = styled.button`
  width: 48px;
  flex: none;
  display: grid;
  place-items: center;
  background: #0b0b0b;
`;

const Cortana = styled.label`
  display: flex;
  align-items: center;
  width: 344px;
  flex: none;
  padding: 0 13px 0 8px;
  gap: 9px;
  background: #f1f1f1;
  color: #333;
  > input { flex: 1; min-width: 0; font-size: 14px; line-height: 20px; }
  > input::placeholder { color: #444; opacity: 1; }
`;

const TaskSlot = styled.button<{ $w: number; $bar?: number; $on?: boolean }>`
  width: ${(p) => p.$w}px;
  flex: none;
  display: grid;
  place-items: center;
  background-color: ${(p) => (p.$on ? "#37464a" : "transparent")};
  ${(p) => p.$bar && `
    background-image: linear-gradient(#76b9ed, #76b9ed);
    background-repeat: no-repeat;
    background-position: center bottom;
    background-size: ${p.$bar}px 2px;
  `}
`;

const WebSearch = styled.label`
  display: flex;
  align-items: center;
  gap: 5px;
  align-self: center;
  width: 151px;
  height: 30px;
  flex: none;
  padding: 0 7px 0 3px;
  border: 1px solid #777;
  background: #474747;
  > input { flex: 1; min-width: 0; color: #fff; }
  > input::placeholder { color: #a8a8a8; opacity: 1; }
`;

const MiniScroll = styled.div`
  display: flex;
  flex-direction: column;
  width: 17px;
  margin: 0 16px 0 2px;
  flex: none;
  background: #f0f0f0;
  > button { flex: 1; display: grid; place-items: center; }
  > button:first-child { flex: none; height: 17px; background: #dadada; }
`;

const TrayStack = styled.div<{ $w: number }>`
  display: flex;
  flex-direction: column;
  justify-content: center;
  width: ${(p) => p.$w}px;
  flex: none;
  text-align: center;
  line-height: 18px;
`;

const Tray = styled.div`
  display: flex;
  flex: 1;
  align-items: stretch;
  justify-content: flex-end;
`;

const Edge = styled.span`
  width: 4px;
  flex: none;
  border-left: 1px solid #55605f;
`;

const GgjLogo = ({ size }: { size: number }) => (
  <svg width={size} height={size} viewBox="0 0 24 24" aria-hidden="true">
    <rect width="24" height="24" rx="5" fill="#0f93f3" />
    <path d="M16.500 8Q16 5 13.500 5.500 12 6 12 8.500V16q0 3-3 3M12 13H8.500Q5 13 5 10.500 5.500 9 7.500 9.500M12 13h5q2.500 0 2.500-2M12 16q.5 3 3 2.500" fill="none" stroke="#fff" strokeWidth="1.900" strokeLinecap="round" />
  </svg>
);

function WindowsTaskbar() {
  return (
    <TaskBar>
      <Start type="button" aria-label="开始">
        <svg width="16" height="16" viewBox="0 0 16 16"><path d="M0 2.300l6.800-1v6.200H0zM7.600 1.200L16 0v7.500H7.600zM0 8.300h6.800v6.300L0 13.700zM7.600 8.300H16V16l-8.400-1.200z" fill="#fff" /></svg>
      </Start>
      <Cortana>
        <svg width="23" height="23" viewBox="0 0 23 23"><circle cx="11.500" cy="11.500" r="9" fill="none" stroke="#0a0a0a" strokeWidth="2.800" /></svg>
        <input type="text" placeholder="在这里输入你要搜索的内容" aria-label="搜索" />
        <svg width="14" height="18" viewBox="0 0 14 18"><path d="M4.500 1.500h5v10h-5zM1.500 9v5h11V9M7 14v3M4 16.500h6" fill="none" stroke="#333" strokeWidth="1.200" /></svg>
      </Cortana>
      <TaskSlot type="button" $w={48} aria-label="任务视图">
        <svg width="17" height="16" viewBox="0 0 17 16"><path d="M.5 1v2.500h10V1M.5 5.500h10v5H.5zM.5 15v-2.500h10V15M14.500 0v3M14.500 8v8" fill="none" stroke="#fff" /><path d="M13 4h3v3h-3z" fill="#fff" /></svg>
      </TaskSlot>
      <TaskSlot type="button" $w={52} aria-label="风车">
        <svg width="22" height="22" viewBox="0 0 22 22" fill="#e8eaea">
          <path d="M9.500 10.500C5 12 0 10.500 0 6S5-1 8.500 1.500s2 4 3.500 7zM11.500 9.500C10 5 11.500 0 16 0s7 5 4.500 8.500-4 2-7 3.500zM12.500 11.500C17 10 22 11.500 22 16s-5 7-8.500 4.500-2-4-3.500-7zM10.500 12.500C12 17 10.500 22 6 22s-7-5-4.500-8.500 4-2 7-3.500z" stroke="#04171b" strokeWidth=".8" />
        </svg>
      </TaskSlot>
      <WebSearch>
        <svg width="18" height="18" viewBox="0 0 18 18">
          <path d="M14.500 11.500C13 16 5 16 4 10.500 3.500 5 9 3.500 12 5.500c2 1.300 2.500 3 2.500 4H5" fill="none" stroke="#3ba4ee" strokeWidth="2.800" />
          <path d="M1.500 16C-1 12 6 3 12 1.500c4-1 5 1 4 4" fill="none" stroke="#2b84d8" strokeWidth="1.300" />
        </svg>
        <input type="text" placeholder="搜索网页和文件" aria-label="搜索网页和文件" />
        <svg width="18" height="18" viewBox="0 0 18 18"><circle cx="7.500" cy="7.500" r="6" fill="none" stroke="#a0a0a0" strokeWidth="1.200" /><path d="M12 12l5 5" stroke="#a0a0a0" strokeWidth="1.300" /></svg>
      </WebSearch>
      <TaskSlot type="button" $w={51} aria-label="提醒">
        <svg width="28" height="28" viewBox="0 0 28 28">
          <path d="M10 14c2-2 4 1 2.500 3S6 18 6.500 13.500 13 7 17 10s3 11-3 13.500S1.500 22 1 15.500 6 6 10 5.500M17 10c2 3 1 8-3 9.500" fill="none" stroke="#e6e6e6" strokeWidth="1.500" />
          <path d="M21 1c4 0 4 4 4 7l2 3H15l2-3c0-3 0-7 4-7zM19.500 11.500h3v2h-3z" fill="#e8a80c" />
        </svg>
      </TaskSlot>
      <TaskSlot type="button" $w={43} $bar={33} aria-label="浏览器">
        <svg width="26" height="26" viewBox="0 0 26 26">
          <path d="M25 1.500c-1 3-3.500 4.500-7.500 4.500-6-.5-10 3-9.500 7 .5 3.500 3.500 5 6.500 4.500 2.500-.5 3.500-2 3.500-3.500h-5c1-2.500 4-4.500 10-3.500 1.500 8-3 14-10.500 14S1 19 1 13C1 5.500 7 1 13.500 2c4 .8 8 1.500 11.500-.5z" fill="#1d9bea" />
          <path d="M3 10C5 4 10 2.500 15 3.500" fill="none" stroke="#7fd4fb" strokeWidth="1.300" />
        </svg>
      </TaskSlot>
      <TaskSlot type="button" $w={42} $bar={33} aria-label="笔记">
        <svg width="24" height="24" viewBox="0 0 24 24">
          <rect width="24" height="24" rx="2" fill="#f39a1e" />
          <path d="M3 5l13-2 2 15-12 3z" fill="#fff6dc" />
          <path d="M5.500 9l6-1M6 12l6-1M6.500 15l6-1" stroke="#b9803c" />
          <path d="M21 2.500L12 14l-1.500 4L14 15.500 22.500 4z" fill="#7d2f12" stroke="#fff" strokeWidth=".5" />
        </svg>
      </TaskSlot>
      <TaskSlot type="button" $w={42} $bar={33} aria-label="图集">
        <svg width="24" height="24" viewBox="0 0 24 24">
          <rect width="24" height="24" rx="3" fill="#2277cd" />
          <rect x="2" y="2" width="20" height="9" rx="3" fill="#4ca8ea" />
          <path d="M4 9l8 1.500L20 9v9l-8 2-8-2z" fill="#f3f8fc" />
          <path d="M12 10.500V20M6 12l4 .8M6 15l4 .8" stroke="#93b3cc" />
          <circle cx="15" cy="8" r="4" fill="#d5ecfb" stroke="#7ba3c7" strokeWidth="1.300" />
          <path d="M18 11l3 4" stroke="#e8973a" strokeWidth="2" />
        </svg>
      </TaskSlot>
      <TaskSlot type="button" $w={41} $bar={41} $on aria-label="广联达"><GgjLogo size={24} /></TaskSlot>
      <TaskSlot type="button" $w={42} $bar={32} aria-label="帮助">
        <svg width="18" height="20" viewBox="0 0 18 20">
          <path d="M1 8h8v11H1z" fill="#f3f3f3" stroke="#888" />
          <path d="M3 11h4M3 13h4M3 16h4" stroke="#777" />
          <path d="M8.500 5c0-5 7.500-4.500 7.500-.5 0 3-3.500 3-3.500 6.500M12.500 13v3" fill="none" stroke="#ffee12" strokeWidth="3" />
        </svg>
      </TaskSlot>
      <MiniScroll>
        <button type="button" aria-label="上一组"><Chevron dir="up" color="#111" size={8} /></button>
        <button type="button" aria-label="下一组"><Chevron dir="down" color="#555" size={8} /></button>
      </MiniScroll>
      <Tray>
        <TaskSlot type="button" $w={28} aria-label="人脉">
          <svg width="16" height="18" viewBox="0 0 16 18" fill="none" stroke="#e6e6e6" strokeWidth="1.300"><circle cx="10.500" cy="4" r="2.800" /><circle cx="4.500" cy="9" r="2.300" /><path d="M1 16c0-5 7-5 7 0M8.500 8.500c3-2 6.500 0 6.500 4" /></svg>
        </TaskSlot>
        <MenuSpacer />
        <TrayStack $w={82}><span>34%</span><span>CPU使用</span></TrayStack>
        <TaskSlot type="button" $w={18} aria-label="显示隐藏的图标">
          <svg width="13" height="8" viewBox="0 0 13 8"><path d="M.8 7l5.700-6 5.700 6" fill="none" stroke="#fff" strokeWidth="1.200" /></svg>
        </TaskSlot>
        <TaskSlot type="button" $w={30} aria-label="电池">
          <svg width="16" height="14" viewBox="0 0 16 14"><path d="M4.500 4.500h9v7h-9zM14 6.500h1.500v3H14M1 1v3M4 1v3M0 4h5v2q-2.500 2-5 0zM2.500 7v4H4" fill="none" stroke="#fff" /><path d="M6 6h6v4H6z" fill="#fff" /></svg>
        </TaskSlot>
        <TaskSlot type="button" $w={20} aria-label="网络">
          <svg width="14" height="14" viewBox="0 0 14 14" fill="none" stroke="#ddd" strokeWidth="1.200"><path d="M1 13C1 6 6 1 13 1M4 13c0-5 4-9 9-9M7 13c0-3.500 2.500-6 6-6M10 13c0-2 1-3 3-3" /></svg>
        </TaskSlot>
        <TaskSlot type="button" $w={26} aria-label="音量">
          <svg width="17" height="14" viewBox="0 0 17 14" fill="none" stroke="#fff" strokeWidth="1.100"><path d="M1 5h2.500L7 1.500v11L3.500 9H1zM9 4.500q1.800 2.500 0 5M11.500 3q2.800 4 0 8M14 1.500q4 5.500 0 11" /></svg>
        </TaskSlot>
        <TaskSlot type="button" $w={28} aria-label="触摸键盘">
          <svg width="23" height="14" viewBox="0 0 23 14" fill="none" stroke="#fff"><path d="M.5.5h22v13H.5zM6 10.500h11" /><path d="M3 4.500h17M3 7.500h17" strokeDasharray="2 1" /></svg>
        </TaskSlot>
        <TaskSlot type="button" $w={29}>中</TaskSlot>
        <TaskSlot type="button" $w={28} aria-label="搜狗输入法"><SogouLogo size={16} /></TaskSlot>
        <TrayStack $w={78}><span>15:57</span><span>2018/10/31</span></TrayStack>
        <TaskSlot type="button" $w={48} aria-label="通知">
          <svg width="25" height="25" viewBox="0 0 25 25">
            <path d="M1 1h16v13H8l-3 3v-3H1z" fill="#fff" />
            <path d="M4 4.500h10M4 7.500h10M4 10.500h6" stroke="#111" />
            <circle cx="16.500" cy="16" r="7.800" fill="#3a3f41" stroke="#8a8f91" />
            <text x="16.500" y="20" fontSize="11" fontWeight="bold" fontFamily="Noto Sans" fill="#fff" textAnchor="middle">2</text>
          </svg>
        </TaskSlot>
        <Edge />
      </Tray>
    </TaskBar>
  );
}

/* ---------- page ---------- */

const menus = [
  "文件(F)", "编辑(E)", "楼层(L)", "构件(N)", "绘图(D)", "修改(M)", "钢筋量(Q)", "视图(V)", "工具(T)",
  "云应用(Y)", "BIM应用(I)", "在线服务(S)", "帮助(H)", "版本号(B)",
];

export default function App() {
  return (
    <Page>
      <Global />
      <TitleBar>
        <GgjLogo size={16} />
        <TitleText>
          广联达<TitleLatin>BIM</TitleLatin>钢筋算量软件
          <TitleLatin>{" GGJ2013 - [C:\\Users\\Administrator.PC-20141127NRHM\\Desktop\\"}</TitleLatin>
          白龙村<TitleLatin>-2018-02-03-20-08-17(2666).GGJ12]</TitleLatin>
        </TitleText>
        <WindowButtons>
          <PlainButton type="button" aria-label="最小化"><svg width="11" height="11" viewBox="0 0 11 11"><path d="M0 5.500h11" stroke="#777" /></svg></PlainButton>
          <PlainButton type="button" aria-label="还原"><svg width="11" height="11" viewBox="0 0 11 11"><path d="M.5 2.500h8v8h-8zM2.500 2V.5h8v8H9" fill="none" stroke="#777" /></svg></PlainButton>
          <PlainButton type="button" aria-label="关闭"><svg width="11" height="11" viewBox="0 0 11 11"><path d="M.5.5l10 10M10.500.5l-10 10" stroke="#777" /></svg></PlainButton>
        </WindowButtons>
      </TitleBar>
      <MenuBar>
        {menus.map((m) => <MenuItem type="button" key={m}>{m}</MenuItem>)}
        <MenuSpacer $w={9} />
        <MenuItem type="button">新建变更<Caret /></MenuItem>
        <MenuSpacer />
        <AccountStub />
        <Account>
          <MenuItem type="button"><Icon name="user" /><span>13907298339</span><Caret /></MenuItem>
          <a href="#beans">造价豆:0</a>
          <PlainButton type="button" aria-label="消息"><Icon name="bell" /></PlainButton>
          <ToolButton type="button"><Icon name="chat" />我要建议</ToolButton>
        </Account>
      </MenuBar>
      <ToolbarRow>
        <ToolStrip $width={151}>
          <PlainButton type="button" aria-label="新建"><Icon name="doc" /></PlainButton>
          <ToolButton type="button" aria-label="打开"><Icon name="open" /><Caret /></ToolButton>
          <PlainButton type="button" aria-label="保存"><Icon name="save" /></PlainButton>
          <Divider />
          <ToolButton type="button" aria-label="撤销"><Icon name="undo" /><Caret /></ToolButton>
          <More type="button" aria-label="更多">»</More>
        </ToolStrip>
        <ToolStrip $width={548}>
          <Tool icon="paint" label="绘图" />
          <Tool icon="sigma" label="汇总计算" />
          <Tool icon="cloud" label="云检查" />
          <Tool icon="align" label="平齐板顶" dim />
          <Tool icon="binoc" label="查找图元" dim />
          <Tool icon="glasses" label="查看钢筋量" dim />
          <Tool icon="batch" label="批量选择" dim />
          <More type="button" aria-label="更多">»</More>
        </ToolStrip>
        <ToolStrip $grow $left={3}>
          <Tool icon="slab" label="二维" dim caret boxed />
          <Tool icon="cube" label="俯视" dim caret />
          <Tool icon="orbit" label="动态观察" dim />
          <Tool icon="part3d" label="局部三维" dim />
          <Divider />
          <Tool icon="full" label="全屏" dim />
          <Tool icon="zoom" label="缩放" dim caret />
          <Tool icon="pan" label="平移" dim caret />
          <Tool icon="rotate" label="屏幕旋转" dim caret="tight" />
          <Divider />
          <Tool icon="floors" label="选择楼层" dim />
          <More type="button" aria-label="更多">»</More>
        </ToolStrip>
      </ToolbarRow>
      <Body>
        <ModuleNav />
        <WorkArea />
        <SectionEditor />
      </Body>
      <StatusBar>
        <StatusCell $w={148} />
        <StatusCell $w={78}><Song>层高:4.5m</Song></StatusCell>
        <StatusCell $w={98}><Song>底标高:4.45m</Song></StatusCell>
        <StatusCell $w={48}><Song>0</Song></StatusCell>
        <StatusCell><Song>输入范围: (0, 10000]之间的整数</Song></StatusCell>
        <StatusCell $w={70}><Song>97.2 FPS</Song></StatusCell>
      </StatusBar>
      <WindowsTaskbar />
      <Ball>78</Ball>
      <ImeBar>
        <ImeLogo><SogouLogo size={28} /></ImeLogo>
        <ImeText>中</ImeText>
        <svg width="16" height="16" viewBox="0 0 16 16"><circle cx="5" cy="6" r="2" fill="none" stroke="#1e6fc4" strokeWidth="1.400" /><path d="M10 9.500a2 2 0 1 1 3 1.500q-.5 2-2.500 3 1-1.500.8-2.500z" fill="#1e6fc4" /></svg>
        <svg width="16" height="16" viewBox="0 0 16 16" fill="none" stroke="#1e6fc4" strokeWidth="1.600"><circle cx="8" cy="8" r="7" /><path d="M4.500 9q3.500 5 7 0M6 5v2M10 5v2" /></svg>
        <svg width="16" height="16" viewBox="0 0 16 16"><rect x="5.500" y="0" width="5" height="9" rx="2.500" fill="#1e6fc4" /><path d="M3 6.500q0 5 5 5t5-5M8 12v3.500" fill="none" stroke="#1e6fc4" strokeWidth="1.600" /></svg>
        <svg width="16" height="16" viewBox="0 0 16 16"><rect y="2" width="16" height="12" rx="1" fill="#1e6fc4" /><path d="M2 5.500h12M2 8h12" stroke="#fff" strokeDasharray="2 1" strokeWidth="1.300" /><path d="M4 11.500h8" stroke="#fff" strokeWidth="1.300" /></svg>
        <svg width="17" height="16" viewBox="0 0 17 16"><circle cx="6.500" cy="4" r="3" fill="#a9bdd6" /><path d="M1 15c0-8 8-8 10-4" fill="none" stroke="#a9bdd6" strokeWidth="2" /><rect x="6" y="8" width="11" height="7" fill="#a9bdd6" /><text x="7" y="14" fontSize="7" fontWeight="bold" fontFamily="Liberation Sans" fill="#fff">26</text></svg>
        <svg width="16" height="16" viewBox="0 0 16 16"><path d="M4.500 1.500q3.500 3 7 0L16 4.500 14 8l-2-1v8H4V7L2 8 0 4.500z" fill="#1e6fc4" /></svg>
        <svg width="16" height="16" viewBox="0 0 16 16"><path d="M2 14l7-7" stroke="#1e6fc4" strokeWidth="3.400" strokeLinecap="round" /><path d="M15 4.500a4.500 4.500 0 1 1-4-3.700L9.500 4l2 2.300z" fill="#1e6fc4" /></svg>
      </ImeBar>
    </Page>
  );
}
